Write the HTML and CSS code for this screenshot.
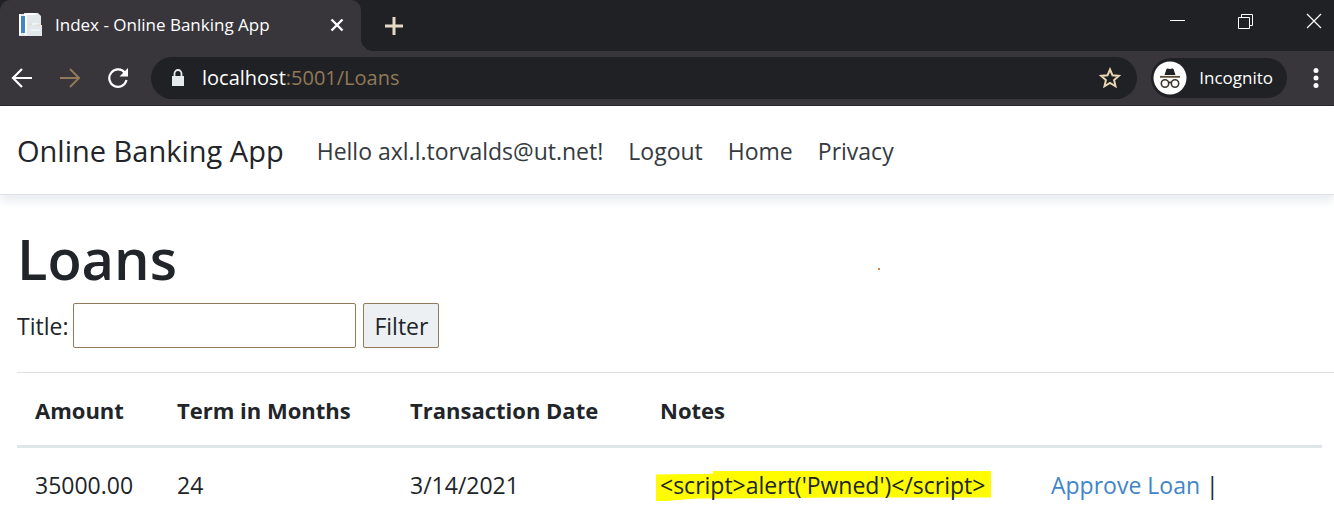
FILE: index.html
```html
<!DOCTYPE html>
<html lang="en">
<head>
<meta charset="utf-8">
<title>Index - Online Banking App</title>
<link rel="stylesheet" href="styles.css">
</head>
<body>
<div class="browser">
  <div class="tab-strip">
    <div class="tab">
      <svg class="favicon" width="26" height="26" viewBox="0 0 26 26" aria-hidden="true">
        <path d="M1 2h5V1h14l3 3v9h1v11H1z" fill="#e1e7ea"/><path d="M1 2h2v21H1zM6 2h3v21H6z" fill="#fff"/><path d="M3 4h4v17H3z" fill="#3f85c8"/>
        <path d="M9 1h9v2H9zM13 10h9M13 16h9" fill="#fff"/><path d="M14 12h7M13 18h9" stroke="#fff" stroke-width="1"/><path d="M12 13v-1h2M18 13h4" stroke="#ead6b4" fill="none"/>
      </svg>
      <span class="tab-title">Index - Online Banking App</span>
      <button class="bare" aria-label="Close tab"><svg width="14" height="14" viewBox="0 0 14 14"><path d="M1.500 1.500l11 11M12.500 1.500l-11 11" stroke="#fff" stroke-width="2.400"/></svg></button>
    </div>
    <button class="bare new-tab" aria-label="New tab"><svg width="20" height="20" viewBox="0 0 20 20"><path d="M10 1v18M1 10h18" stroke="#e6d9c8" stroke-width="3"/></svg></button>
    <div class="window-controls">
      <button class="bare" aria-label="Minimize"><svg width="16" height="16" viewBox="0 0 16 16"><path d="M0 7.500h15" stroke="#fff"/></svg></button>
      <button class="bare" aria-label="Restore"><svg width="16" height="16" viewBox="0 0 16 16"><path d="M.5 4.500h11v11H.5zM3.500 4.500v-3h11v11h-3" fill="none" stroke="#fff"/></svg></button>
      <button class="bare" aria-label="Close"><svg width="16" height="16" viewBox="0 0 16 16"><path d="M1 1l14 14M15 1L1 15" stroke="#fff" stroke-width="1.200"/></svg></button>
    </div>
  </div>
  <div class="toolbar">
    <button class="bare" aria-label="Back"><svg width="22" height="22" viewBox="0 0 22 22"><path d="M21 11H3M11 2l-9 9 9 9" fill="none" stroke="#fff" stroke-width="2.200"/></svg></button>
    <button class="bare" aria-label="Forward"><svg width="22" height="22" viewBox="0 0 22 22"><path d="M1 11h18M11 2l9 9-9 9" fill="none" stroke="#917959" stroke-width="2"/></svg></button>
    <button class="bare" aria-label="Reload"><svg width="22" height="22" viewBox="0 0 22 22"><path d="M18 6A8.700 8.700 0 1 0 19.500 13" fill="none" stroke="#fff" stroke-width="2.200"/><path d="M21 1v8.500h-8.500z" fill="#fff"/></svg></button>
    <div class="address">
      <svg width="14" height="18" viewBox="0 0 14 18" aria-hidden="true"><path d="M1 7h12v10H1z" fill="#e4eaed"/><path d="M3.500 7V4.500a3.500 3.500 0 0 1 7 0V7" fill="none" stroke="#e4eaed" stroke-width="1.800"/></svg>
      <span class="url">localhost<span class="url-path">:5001/Loans</span></span>
      <button class="bare star" aria-label="Bookmark"><svg width="22" height="22" viewBox="0 0 22 22"><path d="M11 2.500l2.500 5.800 6.300.6-4.700 4.200 1.400 6.200-5.500-3.300-5.500 3.300 1.400-6.200L2.200 8.900l6.300-.6z" fill="none" stroke="#ead6b4" stroke-width="2"/></svg></button>
    </div>
    <div class="incognito">
      <svg width="34" height="34" viewBox="0 0 34 34" aria-hidden="true"><circle cx="17" cy="17" r="16.500" fill="#fff"/><path d="M11.500 14l2-6q.4-.8 1.200-.5l2.300.6 2.300-.6q.8-.3 1.200.5l2 6z" fill="#202124"/><path d="M7 15.800h20" stroke="#5a4a34" stroke-width="1.800"/><circle cx="12" cy="22.500" r="3.700" fill="none" stroke="#3b342b" stroke-width="1.600"/><circle cx="22" cy="22.500" r="3.700" fill="none" stroke="#3b342b" stroke-width="1.600"/><path d="M15.500 22q1.500-1.500 3 0" fill="none" stroke="#3b342b" stroke-width="1.500"/></svg>
      <span>Incognito</span>
    </div>
    <button class="bare" aria-label="Menu"><svg width="6" height="20" viewBox="0 0 6 20"><circle cx="3" cy="2.500" r="2.500" fill="#fff"/><circle cx="3" cy="10" r="2.500" fill="#fff"/><circle cx="3" cy="17.500" r="2.500" fill="#fff"/></svg></button>
  </div>
</div>
<nav class="navbar">
  <a class="brand" href="#">Online Banking App</a>
  <a class="nav-link" href="#">Hello axl.l.torvalds@ut.net!</a>
  <button class="bare nav-link">Logout</button>
  <a class="nav-link" href="#">Home</a>
  <a class="nav-link" href="#">Privacy</a>
</nav>
<main class="content">
  <h1>Loans</h1>
  <span class="speck"></span>
  <form class="filter">
    <label for="title">Title:</label>
    <input id="title" type="text">
    <button type="button">Filter</button>
  </form>
  <div class="table-area">
    <table>
      <colgroup><col class="c-amount"><col class="c-term"><col class="c-date"><col class="c-notes"><col></colgroup>
      <thead><tr><th>Amount</th><th>Term in Months</th><th>Transaction Date</th><th>Notes</th><th></th></tr></thead>
      <tbody><tr><td>35000.00</td><td>24</td><td>3/14/2021</td><td><mark>&lt;script&gt;alert('Pwned')&lt;/script&gt;</mark></td><td><a href="#">Approve Loan</a> |</td></tr></tbody>
    </table>
  </div>
</main>
</body>
</html>
```
FILE: styles.css
```css
* { box-sizing: border-box; }
body { margin: 0; background: #fff; color: #212529; font: 23px/36px "Open Sans", "Noto Sans", sans-serif; overflow-x: hidden; }
a { text-decoration: none; color: #3f85c8; }
svg { display: block; flex: none; }
.bare { border: 0; padding: 0; background: none; color: inherit; font: inherit; flex: none; }
.browser { color: #fff; font-size: 17px; background: #38363b; border-bottom: 1px solid #202124; }
.tab-strip { height: 51px; display: flex; background: #202124; }
.tab { width: 361px; padding: 0 17px 2px 18px; display: flex; align-items: center; background: #38363b; border-radius: 10px 10px 0 0; position: relative; }
.tab::after { content: ""; position: absolute; left: 100%; bottom: 0; width: 12px; height: 12px; background: radial-gradient(circle at 100% 0, #202124 12px, #38363b 12px); }
.tab-title { flex: 1; margin-left: 11px; white-space: nowrap; }
.new-tab { margin-left: 23px; }
.window-controls { margin: 13px 12px 0 auto; display: flex; align-items: flex-start; gap: 52px; }
.toolbar { height: 54px; padding: 0 15px 0 11px; display: flex; align-items: center; }
.toolbar > .bare + .bare { margin-left: 26px; }
.address { flex: 1; height: 42px; margin-left: 22px; padding: 0 16px 0 20px; display: flex; align-items: center; background: #202124; border-radius: 21px; }
.url { margin-left: 17px; font-size: 20px; }
.url-path { color: #917959; }
.star { margin-left: auto; }
.incognito { height: 40px; margin: 0 26px 0 14px; padding: 0 14px 0 2px; display: flex; align-items: center; gap: 12px; background: #202124; border-radius: 20px; }
.navbar { height: 89px; padding: 2px 17px 0; display: flex; align-items: center; border-bottom: 1px solid #dee2e6; box-shadow: 0 7px 8px #eceff2; white-space: nowrap; }
.brand { font-size: 29px; color: #212529; margin-right: 33px; }
.nav-link { color: #343a40; margin-right: 25px; }
.content { padding: 33px 0 0 17px; position: relative; }
h1 { margin: 0; font-size: 56px; line-height: 60px; font-weight: 600; }
.speck { position: absolute; left: 878px; top: 73px; width: 2px; height: 2px; background: #c98a5b; }
.filter { display: flex; align-items: center; margin: 15px 0 24px; }
.filter input { width: 283px; height: 45px; margin: 0 7px 0 5px; border: 1px solid #917959; border-radius: 2px; font: inherit; }
.filter button { height: 45px; padding: 0 10px; border: 1px solid #917959; border-radius: 2px; background: #ecf0f3; color: #212529; font: inherit; }
.table-area { border-top: 1px solid #dee2e6; padding-right: 12px; }
table { width: 100%; table-layout: fixed; border-collapse: separate; border-spacing: 0; }
th, td { padding: 19px 18px 17px; text-align: left; white-space: nowrap; }
th { border-bottom: 3px solid #dee6e8; font-size: 22px; }
.c-amount { width: 142px; }
.c-term { width: 233px; }
.c-date { width: 250px; }
.c-notes { width: 391px; }
mark { position: relative; z-index: 0; background: none; color: inherit; }
mark::before { content: ""; position: absolute; z-index: -1; inset: 2px -6px 0 -4px; background: #fffb00; clip-path: polygon(0 12%, 17% 9%, 17% 0, 100% 0, 100% 88%, 52% 88%, 42% 90%, 12% 92%, 3% 100%, 0 100%); }
```
